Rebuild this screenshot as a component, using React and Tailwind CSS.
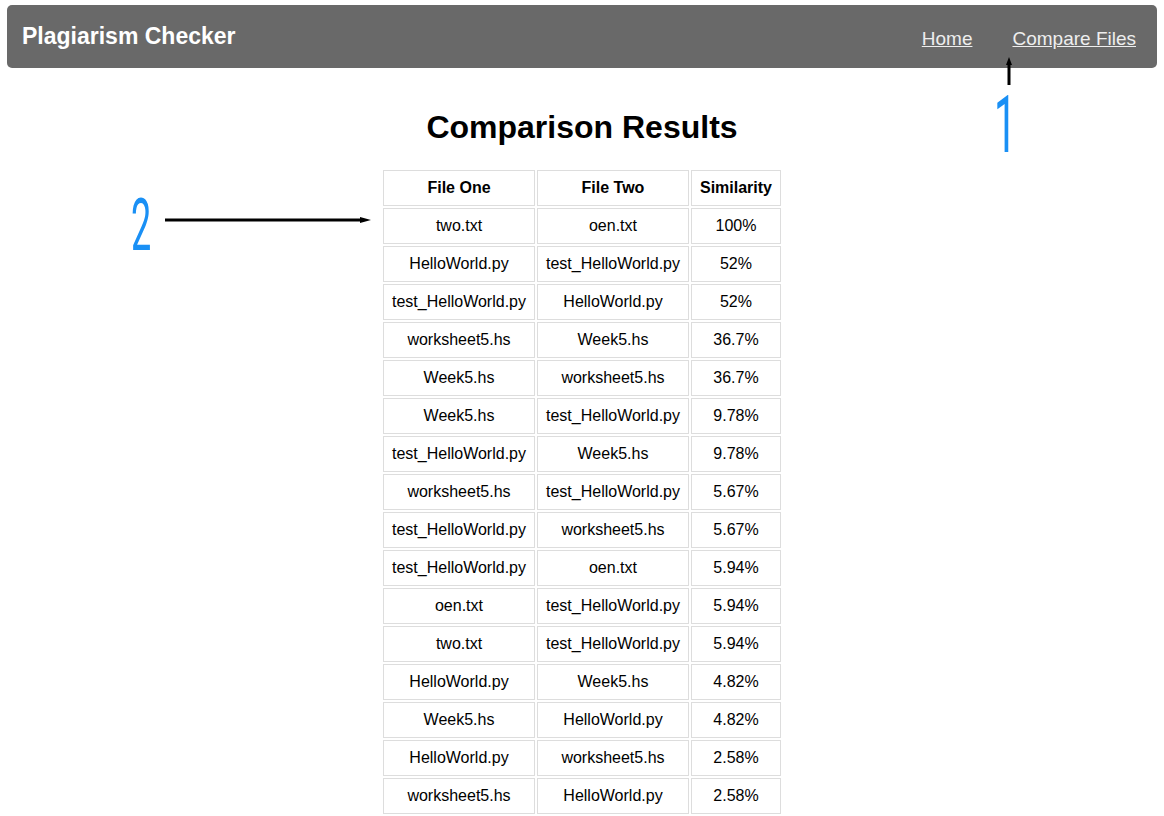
const results = [
  ["two.txt", "oen.txt", "100%"],
  ["HelloWorld.py", "test_HelloWorld.py", "52%"],
  ["test_HelloWorld.py", "HelloWorld.py", "52%"],
  ["worksheet5.hs", "Week5.hs", "36.7%"],
  ["Week5.hs", "worksheet5.hs", "36.7%"],
  ["Week5.hs", "test_HelloWorld.py", "9.78%"],
  ["test_HelloWorld.py", "Week5.hs", "9.78%"],
  ["worksheet5.hs", "test_HelloWorld.py", "5.67%"],
  ["test_HelloWorld.py", "worksheet5.hs", "5.67%"],
  ["test_HelloWorld.py", "oen.txt", "5.94%"],
  ["oen.txt", "test_HelloWorld.py", "5.94%"],
  ["two.txt", "test_HelloWorld.py", "5.94%"],
  ["HelloWorld.py", "Week5.hs", "4.82%"],
  ["Week5.hs", "HelloWorld.py", "4.82%"],
  ["HelloWorld.py", "worksheet5.hs", "2.58%"],
  ["worksheet5.hs", "HelloWorld.py", "2.58%"],
];

export default function App() {
  return (
    <div
      className="relative min-h-[816px] bg-white pt-[5px] px-[7px] text-black"
      style={{ fontFamily: '"Liberation Sans", Arial, sans-serif' }}
    >
      <nav className="flex h-[63px] items-center justify-between rounded-[5px] bg-[#696969] pl-[15px]">
        <span className="text-[23px] font-bold text-white">Plagiarism Checker</span>
        <div className="flex items-center pt-[6px]">
          <a href="#" className="px-[20px] text-[19px] text-[#eeeeee] underline">
            Home
          </a>
          <a href="#" className="pl-[20px] pr-[21px] text-[19px] text-[#eeeeee] underline">
            Compare Files
          </a>
        </div>
      </nav>

      <h1 className="mt-[41px] text-center text-[32px] font-bold leading-[37px]">
        Comparison Results
      </h1>

      <table className="mx-auto mt-[22px] border-separate border-spacing-[2px] text-[16px]">
        <thead>
          <tr>
            <th className="border border-[#dddddd] px-[8px] py-[8px] font-bold leading-[18px]">File One</th>
            <th className="border border-[#dddddd] px-[8px] py-[8px] font-bold leading-[18px]">File Two</th>
            <th className="border border-[#dddddd] px-[8px] py-[8px] font-bold leading-[18px]">Similarity</th>
          </tr>
        </thead>
        <tbody>
          {results.map((r, i) => (
            <tr key={i}>
              {r.map((c, j) => (
                <td key={j} className="border border-[#dddddd] px-[8px] py-[8px] text-center leading-[18px]">
                  {c}
                </td>
              ))}
            </tr>
          ))}
        </tbody>
      </table>

      {/* annotation 1 */}
      <svg className="absolute left-[1001px] top-[55px]" width="16" height="32" viewBox="0 0 16 32">
        <path d="M8 8 L8 30" stroke="#000" strokeWidth="3" />
        <path d="M8 2 L11 10 L5 10 Z" fill="#000" />
      </svg>
      <span
        className="absolute left-[994px] top-[85px] origin-top-left scale-x-50 text-[80px] leading-none text-[#1a90f5]"
        style={{ fontFamily: "Roboto, sans-serif" }}
      >
        1
      </span>

      {/* annotation 2 */}
      <span
        className="absolute left-[131px] top-[190px] origin-top-left scale-x-50 text-[72px] leading-none text-[#1a90f5]"
        style={{ fontFamily: "Roboto, sans-serif" }}
      >
        2
      </span>
      <svg className="absolute left-[164px] top-[214px]" width="210" height="12" viewBox="0 0 210 12">
        <path d="M1 6 L198 6" stroke="#000" strokeWidth="3" />
        <path d="M207 6 L196 3 L196 9 Z" fill="#000" />
      </svg>
    </div>
  );
}
